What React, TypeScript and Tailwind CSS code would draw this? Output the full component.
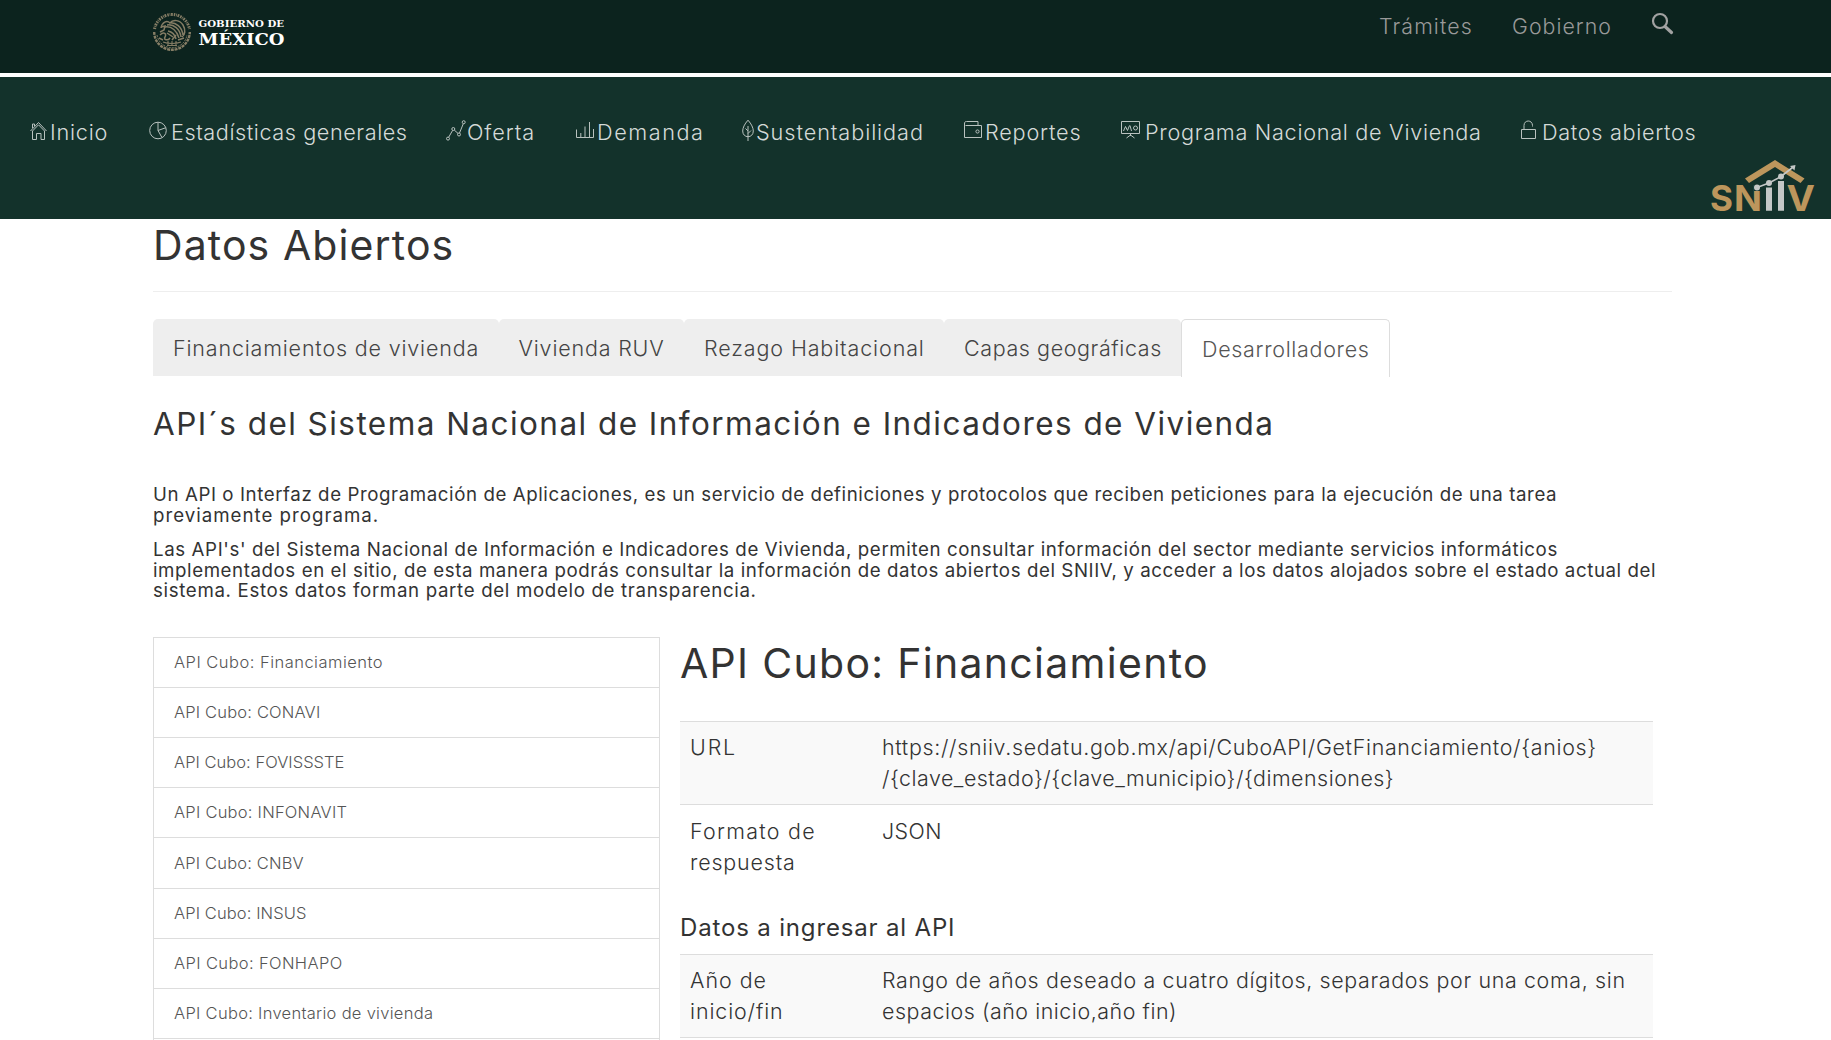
import type { ReactNode } from "react";

const stroke = { fill: "none", stroke: "currentColor", strokeWidth: 1 };

const HomeIcon = () => (
  <svg className="h-6 w-5" viewBox="0 0 20 24" {...stroke}>
    <path d="M0.5 12 L8.5 3.5 L16.5 12 M2.5 12 L8.5 5.8 L14.5 12 V20.5 H11 V14.5 H6.5 V20.5 H2.5 Z M2.5 9 V5 H4.5 V7" />
  </svg>
);
const PieIcon = () => (
  <svg className="h-6 w-[22px]" viewBox="0 0 22 24" {...stroke}>
    <circle cx="9" cy="11.5" r="8.3" />
    <path d="M9 3.2 V11.5 L13 18.6 M9 11.5 L16.8 8.7" />
  </svg>
);
const LineIcon = () => (
  <svg className="h-6 w-[21px]" viewBox="0 0 21 24" {...stroke}>
    <circle cx="2" cy="19.6" r="1.5" />
    <circle cx="7.3" cy="10" r="1.5" />
    <circle cx="13" cy="15.5" r="1.5" />
    <circle cx="17.7" cy="3.2" r="1.5" />
    <path d="M2.7 18.2 L6.6 11.4 M8.3 11.1 L12 14.4 M13.5 14 L17.3 4.7" />
  </svg>
);
const BarsIcon = () => (
  <svg className="h-6 w-[21px]" viewBox="0 0 21 24" {...stroke}>
    <path d="M0.5 10.5 V18.5 H17.5 V10 M4.8 18.5 V14 M9 18.5 V7.5 M13.5 18.5 V3" />
  </svg>
);
const LeafIcon = () => (
  <svg className="h-6 w-[14px]" viewBox="0 0 14 24" {...stroke}>
    <path d="M6 1.2 C2.5 5 0.7 9 0.7 12 C0.7 15.5 3 17.7 6 17.7 C9 17.7 11.3 15.5 11.3 12 C11.3 9 9.5 5 6 1.2 Z M6 7 V22 M3.5 9.5 L6 12 M9 11.5 L6 14.5" />
  </svg>
);
const WalletIcon = () => (
  <svg className="h-6 w-[21px]" viewBox="0 0 21 24" {...stroke}>
    <path d="M0.5 4.5 V18.5 H17.5 V6.5 H1.5 M0.5 5 C0.5 3 1 2.5 2.5 2.5 H14 V6.5" />
    <circle cx="13.5" cy="12.5" r="1.6" />
  </svg>
);
const BoardIcon = () => (
  <svg className="h-6 w-6" viewBox="0 0 24 24" {...stroke}>
    <path d="M0.5 2.5 H18.5 V14.5 H0.5 Z M9.5 14.5 V17 M5.5 19 L9.5 16 L13.5 19 M2.5 12 L4.5 7.5 L6.5 11.5 L8.5 6.5 M9 6.5 L10.5 12" />
    <circle cx="14.5" cy="9" r="2" />
  </svg>
);
const LockIcon = () => (
  <svg className="h-6 w-[21px]" viewBox="0 0 21 24" {...stroke}>
    <path d="M0.5 10.5 H14.5 V19.5 H0.5 Z M3 10.5 V6.5 C3 0.5 11.5 0.5 11.5 6.5 V7.5" />
  </svg>
);

const nav: { icon: ReactNode; label: string; cls: string }[] = [
  { icon: <HomeIcon />, label: "Inicio", cls: "tracking-[0.75px]" },
  { icon: <PieIcon />, label: "Estadísticas generales", cls: "tracking-[0.55px]" },
  { icon: <LineIcon />, label: "Oferta", cls: "tracking-[0.9px]" },
  { icon: <BarsIcon />, label: "Demanda", cls: "tracking-[1.55px]" },
  { icon: <LeafIcon />, label: "Sustentabilidad", cls: "tracking-[0.92px]" },
  { icon: <WalletIcon />, label: "Reportes", cls: "tracking-[0.78px]" },
  { icon: <BoardIcon />, label: "Programa Nacional de Vivienda", cls: "tracking-[0.69px]" },
  { icon: <LockIcon />, label: "Datos abiertos", cls: "tracking-[0.66px]" },
];

const tabs = [
  { label: "Financiamientos de vivienda", cls: "w-[345.5px] tracking-[0.82px]" },
  { label: "Vivienda RUV", cls: "w-[185.5px] tracking-[0.81px]" },
  { label: "Rezago Habitacional", cls: "w-[260px] tracking-[0.88px]" },
  { label: "Capas geográficas", cls: "w-[237px] tracking-[0.59px]" },
];

const apis = [
  { label: "API Cubo: Financiamiento", cls: "h-[50px] tracking-[0.48px]" },
  { label: "API Cubo: CONAVI", cls: "h-[50px] tracking-[0.17px]" },
  { label: "API Cubo: FOVISSSTE", cls: "h-[50px] tracking-[0.03px]" },
  { label: "API Cubo: INFONAVIT", cls: "h-[50px] tracking-[0.24px]" },
  { label: "API Cubo: CNBV", cls: "h-[51px] tracking-[0.16px]" },
  { label: "API Cubo: INSUS", cls: "h-[50px] tracking-[0.1px]" },
  { label: "API Cubo: FONHAPO", cls: "h-[50px] tracking-[0.38px]" },
  { label: "API Cubo: Inventario de vivienda", cls: "h-[50px] tracking-[0.29px]" },
];

function Emblem() {
  return (
    <svg className="h-[40px] w-[40px]" viewBox="-20 -20 40 40" fill="none" stroke="#857d65">
      <path d="M-17.5 -3 A17.8 17.8 0 0 1 17.5 -3" strokeWidth="3" strokeDasharray="1.5 .8 .8 .7 1.8 1" />
      <path d="M-17.8 0 A17.8 17.8 0 0 0 17.8 0" strokeWidth="2.4" strokeDasharray="3 .8" />
      <path d="M-15 3 A15.2 15.2 0 0 0 15 3" strokeWidth="1" strokeDasharray="2 1" />
      <path d="M-11 -4 C-10 -10 -5 -12 -2 -9 C1 -13 8 -12 11 -7 C14 -2 13 3 10 5 M-3 -9 C4 -10 10 -5 11 3 M-5 -7 C2 -8 8 -3 9 5 M-7 -5 C0 -6 5 -1 7 6 M-4 -1 C1 0 3 3 4 7" strokeWidth="1.5" />
      <path d="M-11 -5 L-7 -6 L-8 -2 L-12 0 M-12 3 C-8 -1 -5 2 -7 5 C-9 8 -4 9 -2 6 M-13 6 L-9 8 M-5 1 L1 5 M0 8 L4 3 M6 8 L12 6" strokeWidth="1.5" />
      <path d="M-9 10 C-4 12 4 12 9 10 M-5 13.5 H5 M-4 9 V13 M0 9 V14 M4 9 V13" strokeWidth="1.1" />
    </svg>
  );
}

function SniivLogo() {
  return (
    <svg className="absolute top-[78px] left-[1700px] h-16 w-[125px]" viewBox="0 0 125 64">
      <path d="M45 23.5 L75 5 L104.5 23.5 L100.5 28 L75 12 L49 28 Z" fill="#bd965c" />
      <g fill="#bd965c" fontFamily="Inter, sans-serif" fontWeight="700" fontSize="35">
        <text x="10" y="55.7" textLength="23" lengthAdjust="spacingAndGlyphs">S</text>
        <text x="34" y="55.7" textLength="28" lengthAdjust="spacingAndGlyphs">N</text>
        <text x="86.5" y="55.7" textLength="28.5" lengthAdjust="spacingAndGlyphs">V</text>
      </g>
      <path d="M54 30 H62 V36 H54 Z" fill="#13322b" />
      <path d="M66 32.5 H72 V55.7 H66 Z M78 26 H84 V55.7 H78 Z" fill="#c4c7c6" />
      <path d="M57 32.5 L69 28 L81 21.5 L92.5 12.5" stroke="#c4c7c6" strokeWidth="1.6" fill="none" />
      <g fill="#c4c7c6">
        <circle cx="57" cy="32.5" r="3" />
        <circle cx="69" cy="28" r="3" />
        <circle cx="81" cy="21.5" r="3" />
        <path d="M95.5 10 L94.5 15.5 L90 11 Z" />
      </g>
    </svg>
  );
}

export default function App() {
  return (
    <div className="h-[1040px] w-[1831px] overflow-hidden bg-white font-['Inter',sans-serif] font-light text-[#333] [&_*]:whitespace-nowrap">
      <header className="flex h-[77px] items-start border-b-4 border-white bg-[#0c231e] pl-[152px] text-[21.3px] leading-[29px] text-[#999]">
        <div className="flex w-[1227px] pt-3">
          <Emblem />
          <svg className="ml-[6px] h-10 w-[90px]" viewBox="0 0 90 40" fill="#fff" fontFamily="DejaVu Serif, serif" fontWeight="700">
            <text x="0.5" y="14.7" fontSize="9.8" textLength="85.5" lengthAdjust="spacingAndGlyphs">GOBIERNO DE</text>
            <text x="0.5" y="33.2" fontSize="17" textLength="86" lengthAdjust="spacingAndGlyphs">MÉXICO</text>
          </svg>
        </div>
        <span className="w-[133px] pt-3 tracking-[1.15px]">Trámites</span>
        <span className="w-[139px] pt-3 tracking-[1.05px]">Gobierno</span>
        <svg className="mt-3 h-[23px] w-[23px]" viewBox="0 0 23 23" fill="none" stroke="#a2a2a2">
          <circle cx="9" cy="9" r="7" strokeWidth="2.2" />
          <path d="M14 14.5 L20.5 20.5" strokeWidth="3.2" strokeLinecap="round" />
        </svg>
      </header>

      <nav className="relative h-[142px] bg-[#13322b] pt-10 pl-[30px] text-[21.7px] leading-[30px] text-[#d5dad8]">
        <ul className="grid grid-cols-[119px_297px_130px_166px_222px_157px_400px_200px]">
          {nav.map((n) => (
            <li key={n.label} className="flex">
              <span className="mt-[2px] shrink-0 text-[#b9c2bf]">{n.icon}</span>
              <span className={n.cls}>{n.label}</span>
            </li>
          ))}
        </ul>
        <SniivLogo />
      </nav>

      <main className="ml-[153px] w-[1519px] pt-1">
        <h1 className="text-[41px] leading-[44px] font-normal tracking-[1.1px]">Datos Abiertos</h1>
        <hr className="mt-6 border-[#eee]" />

        <div className="mt-[27px] flex h-[58px] text-[21.5px] leading-[31px] text-[#444]">
          {tabs.map((t) => (
            <div key={t.label} className={`h-[57px] shrink-0 rounded-t-[5px] bg-[#eee] pt-[14px] pl-5 ${t.cls}`}>
              {t.label}
            </div>
          ))}
          <div className="w-[209px] shrink-0 rounded-t-[5px] border border-b-0 border-[#ddd] pt-[14px] pl-5 tracking-[0.68px] text-[#555]">
            Desarrolladores
          </div>
        </div>

        <h2 className="mt-[30px] text-[31.5px] leading-[34px] font-normal tracking-[1.45px]">
          API´s del Sistema Nacional de Información e Indicadores de Vivienda
        </h2>

        <div className="mt-[44px] text-[18.7px] leading-[20.6px] font-normal">
          <p>
            <span className="block tracking-[0.58px]">Un API o Interfaz de Programación de Aplicaciones, es un servicio de definiciones y protocolos que reciben peticiones para la ejecución de una tarea</span>
            <span className="block tracking-[1px]">previamente programa.</span>
          </p>
          <p className="mt-[14px]">
            <span className="block tracking-[0.61px]">Las API's' del Sistema Nacional de Información e Indicadores de Vivienda, permiten consultar información del sector mediante servicios informáticos</span>
            <span className="block tracking-[0.58px]">implementados en el sitio, de esta manera podrás consultar la información de datos abiertos del SNIIV, y acceder a los datos alojados sobre el estado actual del</span>
            <span className="block tracking-[0.66px]">sistema. Estos datos forman parte del modelo de transparencia.</span>
          </p>
        </div>

        <div className="mt-[35px] flex gap-5">
          <ul className="h-[410px] w-[507px] shrink-0 border-x border-[#ddd] text-[16.5px] text-[#555]">
            {apis.map((a) => (
              <li key={a.label} className={`flex items-center border-t border-[#ddd] pl-5 ${a.cls}`}>
                {a.label}
              </li>
            ))}
            <li className="border-t border-[#ddd]" />
          </ul>

          <section className="w-[973px] shrink-0 pt-1">
            <h2 className="text-[41px] leading-[44px] font-normal tracking-[1.3px]">API Cubo: Financiamiento</h2>
            <div className="mt-9 text-[21.4px] leading-[31px]">
              <div className="flex border-t border-[#ddd] bg-[#f9f9f9] py-[10px] pl-[10px]">
                <div className="w-[192px] tracking-[1.9px]">URL</div>
                <div>
                  <div className="tracking-[0.69px]">{"https://sniiv.sedatu.gob.mx/api/CuboAPI/GetFinanciamiento/{anios}"}</div>
                  <div className="tracking-[0.5px]">{"/{clave_estado}/{clave_municipio}/{dimensiones}"}</div>
                </div>
              </div>
              <div className="flex border-t border-[#ddd] pt-[11px] pb-[9px] pl-[10px]">
                <div className="w-[192px]">
                  <div className="tracking-[1.3px]">Formato de</div>
                  <div className="tracking-[0.85px]">respuesta</div>
                </div>
                <div className="tracking-[0.45px]">JSON</div>
              </div>
            </div>
            <h4 className="mt-[28px] text-[24px] leading-[25px] font-normal tracking-[0.84px]">Datos a ingresar al API</h4>
            <div className="mt-[14px] border-y border-[#ddd] bg-[#f9f9f9] text-[21.4px] leading-[31px]">
              <div className="flex py-[10px] pl-[10px]">
                <div className="w-[192px]">
                  <div className="tracking-[1px]">Año de</div>
                  <div className="tracking-[0.9px]">inicio/fin</div>
                </div>
                <div>
                  <div className="tracking-[0.66px]">Rango de años deseado a cuatro dígitos, separados por una coma, sin</div>
                  <div className="tracking-[0.55px]">espacios (año inicio,año fin)</div>
                </div>
              </div>
            </div>
          </section>
        </div>
      </main>
    </div>
  );
}
